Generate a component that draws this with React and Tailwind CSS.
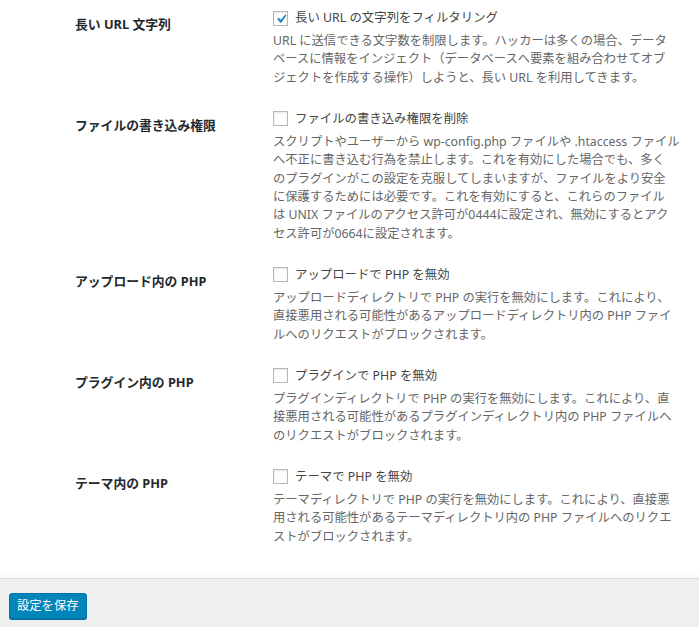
import React from 'react';

const font = { fontFamily: '"Noto Sans", "Noto Sans CJK JP", sans-serif' };

const settings = [
  {
    id: 'long-url',
    title: '長い URL 文字列',
    label: '長い URL の文字列をフィルタリング',
    checked: true,
    lines: [
      'URL に送信できる文字数を制限します。ハッカーは多くの場合、データ',
      'ベースに情報をインジェクト（データベースへ要素を組み合わせてオブ',
      'ジェクトを作成する操作）しようと、長い URL を利用してきます。',
    ],
  },
  {
    id: 'file-write',
    title: 'ファイルの書き込み権限',
    label: 'ファイルの書き込み権限を削除',
    checked: false,
    lines: [
      'スクリプトやユーザーから wp-config.php ファイルや .htaccess ファイル',
      'へ不正に書き込む行為を禁止します。これを有効にした場合でも、多く',
      'のプラグインがこの設定を克服してしまいますが、ファイルをより安全',
      'に保護するためには必要です。これを有効にすると、これらのファイル',
      'は UNIX ファイルのアクセス許可が0444に設定され、無効にするとアク',
      'セス許可が0664に設定されます。',
    ],
  },
  {
    id: 'uploads-php',
    title: 'アップロード内の PHP',
    label: 'アップロードで PHP を無効',
    checked: false,
    lines: [
      'アップロードディレクトリで PHP の実行を無効にします。これにより、',
      '直接悪用される可能性があるアップロードディレクトリ内の PHP ファイ',
      'ルへのリクエストがブロックされます。',
    ],
  },
  {
    id: 'plugins-php',
    title: 'プラグイン内の PHP',
    label: 'プラグインで PHP を無効',
    checked: false,
    lines: [
      'プラグインディレクトリで PHP の実行を無効にします。これにより、直',
      '接悪用される可能性があるプラグインディレクトリ内の PHP ファイルへ',
      'のリクエストがブロックされます。',
    ],
  },
  {
    id: 'themes-php',
    title: 'テーマ内の PHP',
    label: 'テーマで PHP を無効',
    checked: false,
    lines: [
      'テーマディレクトリで PHP の実行を無効にします。これにより、直接悪',
      '用される可能性があるテーマディレクトリ内の PHP ファイルへのリクエ',
      'ストがブロックされます。',
    ],
  },
];

const Checkbox = ({ checked }) => (
  <span className="relative w-[15px] h-[15px] border border-[#b4b9be] bg-white shadow-[inset_0_1px_2px_rgba(0,0,0,0.1)] shrink-0">
    {checked && (
      <svg className="absolute -left-[2px] -top-[2px]" width="18" height="18" viewBox="0 0 20 20">
        <path d="M14.83 4.89l1.34.94-5.81 8.38H9.02L5.78 9.67l1.34-1.25 2.57 2.4z" fill="#1e8cbe" />
      </svg>
    )}
  </span>
);

export default function App() {
  return (
    <div className="min-h-screen flex flex-col bg-white" style={font}>
      {/* settings table */}
      <div className="flex-1 pt-[7px] pl-[75px]">
        {settings.map((s) => (
          <div key={s.id} className="flex pb-[21px]">
            <div className="w-[198px] shrink-0 pt-[8px] text-[12.8px] leading-[18px] font-bold text-[#23282d]">
              {s.title}
            </div>
            <div className="flex flex-col">
              <label className="h-[22px] flex items-center gap-[7px] text-[12.4px] text-[#444]">
                <Checkbox checked={s.checked} />
                <span>{s.label}</span>
              </label>
              <p className="mt-[3px] text-[12.3px] leading-[18.33px] text-[#666] whitespace-nowrap">
                {s.lines.map((line, i) => (
                  <React.Fragment key={i}>
                    {line}
                    {i < s.lines.length - 1 && <br />}
                  </React.Fragment>
                ))}
              </p>
            </div>
          </div>
        ))}
      </div>

      {/* save bar */}
      <div className="border-t border-[#dcdcdc] bg-[#efefef] shadow-[0_-4px_6px_rgba(0,0,0,0.03)] pt-[13px] pb-[8px] pl-[9px]">
        <button className="h-[26px] px-[7px] rounded-[3px] bg-[#0085ba] border border-[#0073aa] shadow-[0_1px_0_#006799] text-white text-[12.3px] leading-none">
          設定を保存
        </button>
      </div>
    </div>
  );
}
